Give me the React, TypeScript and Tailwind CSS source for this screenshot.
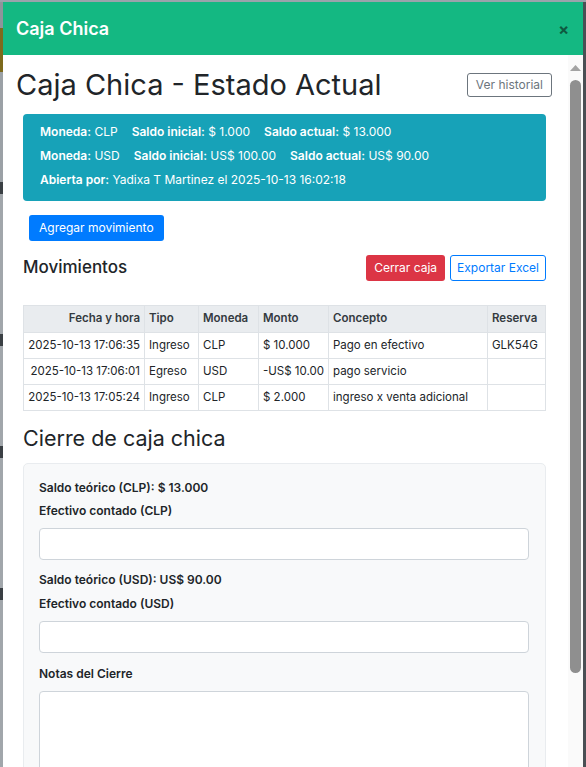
import React from 'react';

const ROWS = [
  { fecha: '2025-10-13 17:06:35', tipo: 'Ingreso', moneda: 'CLP', monto: '$ 10.000', concepto: 'Pago en efectivo', reserva: 'GLK54G' },
  { fecha: '2025-10-13 17:06:01', tipo: 'Egreso', moneda: 'USD', monto: '-US$ 10.00', concepto: 'pago servicio', reserva: '' },
  { fecha: '2025-10-13 17:05:24', tipo: 'Ingreso', moneda: 'CLP', monto: '$ 2.000', concepto: 'ingreso x venta adicional', reserva: '' },
];

const cell = 'border border-[#dee2e6] px-[4px] h-[26px] align-middle whitespace-nowrap overflow-hidden';

export default function App() {
  return (
    <div className="w-[586px] h-[767px] overflow-hidden bg-[#9aa3ab] flex flex-col font-['Inter',sans-serif] text-[#212529]">
      <div className="h-[2px] shrink-0" />
      <div className="flex-1 flex min-h-0">
        {/* page behind the modal */}
        <div className="w-[3px] flex flex-col">
          <div className="h-[26px] bg-[#8d949b]" />
          <div className="h-[44px] bg-[#7d6a1c]" />
          <div className="h-[110px] bg-[#9ba1a6]" />
          <div className="h-[12px] bg-[#3a3f44]" />
          <div className="h-[140px] bg-[#a1a6ab]" />
          <div className="h-[12px] bg-[#3a3f44]" />
          <div className="h-[100px] bg-[#a1a6ab]" />
          <div className="h-[12px] bg-[#3a3f44]" />
          <div className="h-[130px] bg-[#a1a6ab]" />
          <div className="h-[12px] bg-[#3a3f44]" />
          <div className="flex-1 bg-[#a1a6ab]" />
        </div>

        {/* modal */}
        <div className="flex-1 flex flex-col min-w-0">
          <div className="h-[53px] shrink-0 bg-[#14b882] flex items-center justify-between pl-[13px] pr-[14px]">
            <h5 className="text-white text-[18px] font-semibold">Caja Chica</h5>
            <span className="text-[#0e5a40] text-[16px] font-bold leading-none">×</span>
          </div>

          <div className="flex-1 flex bg-white min-h-0">
            <div className="flex-1 min-w-0 pl-[20px] pr-[22px] overflow-hidden">
              {/* title row */}
              <div className="flex items-center justify-between -ml-[7px] -mr-[6px] mt-[13px] h-[34px]">
                <h2 className="text-[29px] font-normal leading-[34px]">Caja Chica - Estado Actual</h2>
                <button className="h-[24px] px-[8px] text-[12px] text-[#6c757d] border border-[#6c757d] rounded-[3px]">
                  Ver historial
                </button>
              </div>

              {/* info */}
              <div className="mt-[12px] bg-[#17a2b8] rounded-[4px] text-white text-[12px] leading-[24px] pt-[6px] pb-[9px] pl-[17px]">
                <div className="flex gap-[14px]">
                  <span><b className="font-semibold">Moneda:</b> CLP</span>
                  <span><b className="font-semibold">Saldo inicial:</b> $ 1.000</span>
                  <span><b className="font-semibold">Saldo actual:</b> $ 13.000</span>
                </div>
                <div className="flex gap-[14px]">
                  <span><b className="font-semibold">Moneda:</b> USD</span>
                  <span><b className="font-semibold">Saldo inicial:</b> US$ 100.00</span>
                  <span><b className="font-semibold">Saldo actual:</b> US$ 90.00</span>
                </div>
                <div>
                  <b className="font-semibold">Abierta por:</b> Yadixa T Martinez el 2025-10-13 16:02:18
                </div>
              </div>

              <button className="mt-[14px] ml-[6px] h-[26px] px-[10px] bg-[#007bff] text-white text-[12px] rounded-[3px]">
                Agregar movimiento
              </button>

              {/* movimientos */}
              <div className="mt-[14px] flex items-center justify-between">
                <h4 className="text-[17px] font-medium">Movimientos</h4>
                <div className="flex gap-[5px]">
                  <button className="h-[26px] px-[8px] bg-[#dc3545] text-white text-[12px] rounded-[3px]">Cerrar caja</button>
                  <button className="h-[26px] px-[6px] border border-[#007bff] text-[#007bff] text-[12px] rounded-[3px]">
                    Exportar Excel
                  </button>
                </div>
              </div>

              <table className="mt-[24px] w-full table-fixed border-collapse text-[11.5px]">
                <colgroup>
                  <col className="w-[121px]" />
                  <col className="w-[54px]" />
                  <col className="w-[60px]" />
                  <col className="w-[70px]" />
                  <col className="w-[159px]" />
                  <col />
                </colgroup>
                <thead>
                  <tr className="bg-[#e9ecef] text-[#343a40]">
                    <th className={`${cell} h-[27px] font-semibold text-right`}>Fecha y hora</th>
                    <th className={`${cell} h-[27px] font-semibold text-left`}>Tipo</th>
                    <th className={`${cell} h-[27px] font-semibold text-left`}>Moneda</th>
                    <th className={`${cell} h-[27px] font-semibold text-left`}>Monto</th>
                    <th className={`${cell} h-[27px] font-semibold text-left`}>Concepto</th>
                    <th className={`${cell} h-[27px] font-semibold text-left`}>Reserva</th>
                  </tr>
                </thead>
                <tbody>
                  {ROWS.map((r) => (
                    <tr key={r.fecha}>
                      <td className={`${cell} text-right`}>{r.fecha}</td>
                      <td className={cell}>{r.tipo}</td>
                      <td className={cell}>{r.moneda}</td>
                      <td className={cell}>{r.monto}</td>
                      <td className={cell}>{r.concepto}</td>
                      <td className={cell}>{r.reserva}</td>
                    </tr>
                  ))}
                </tbody>
              </table>

              <h4 className="mt-[13px] text-[21.5px] leading-[28px] font-normal">Cierre de caja chica</h4>

              {/* cierre form */}
              <div className="mt-[11px] bg-[#f8f9fa] border border-[#e9ecef] rounded-[5px] pt-[15px] pl-[15px] pr-[16px] pb-[20px] text-[12px] leading-[18px] font-semibold">
                <div>Saldo teórico (CLP): $ 13.000</div>
                <div className="mt-[5px]">Efectivo contado (CLP)</div>
                <input className="mt-[8px] block w-full h-[32px] bg-white border border-[#ced4da] rounded-[4px]" />
                <div className="mt-[11px]">Saldo teórico (USD): US$ 90.00</div>
                <div className="mt-[6px]">Efectivo contado (USD)</div>
                <input className="mt-[8px] block w-full h-[32px] bg-white border border-[#ced4da] rounded-[4px]" />
                <div className="mt-[12px]">Notas del Cierre</div>
                <textarea className="mt-[8px] block w-full h-[120px] bg-white border border-[#ced4da] rounded-[4px] resize-none" />
              </div>
            </div>

            {/* scrollbar */}
            <div className="w-[15px] shrink-0 bg-[#fafafa] flex flex-col items-center">
              <svg width="13" height="8" viewBox="0 0 13 8" className="mt-[9px]">
                <path d="M1 7 L6.5 1 L12 7 Z" fill="#a3a3a3" />
              </svg>
              <div className="mt-[8px] w-[11px] h-[593px] bg-[#8f8f8f] rounded-full" />
            </div>
          </div>
        </div>

        <div className="w-[3px] bg-[#4a4f54]" />
      </div>
    </div>
  );
}
